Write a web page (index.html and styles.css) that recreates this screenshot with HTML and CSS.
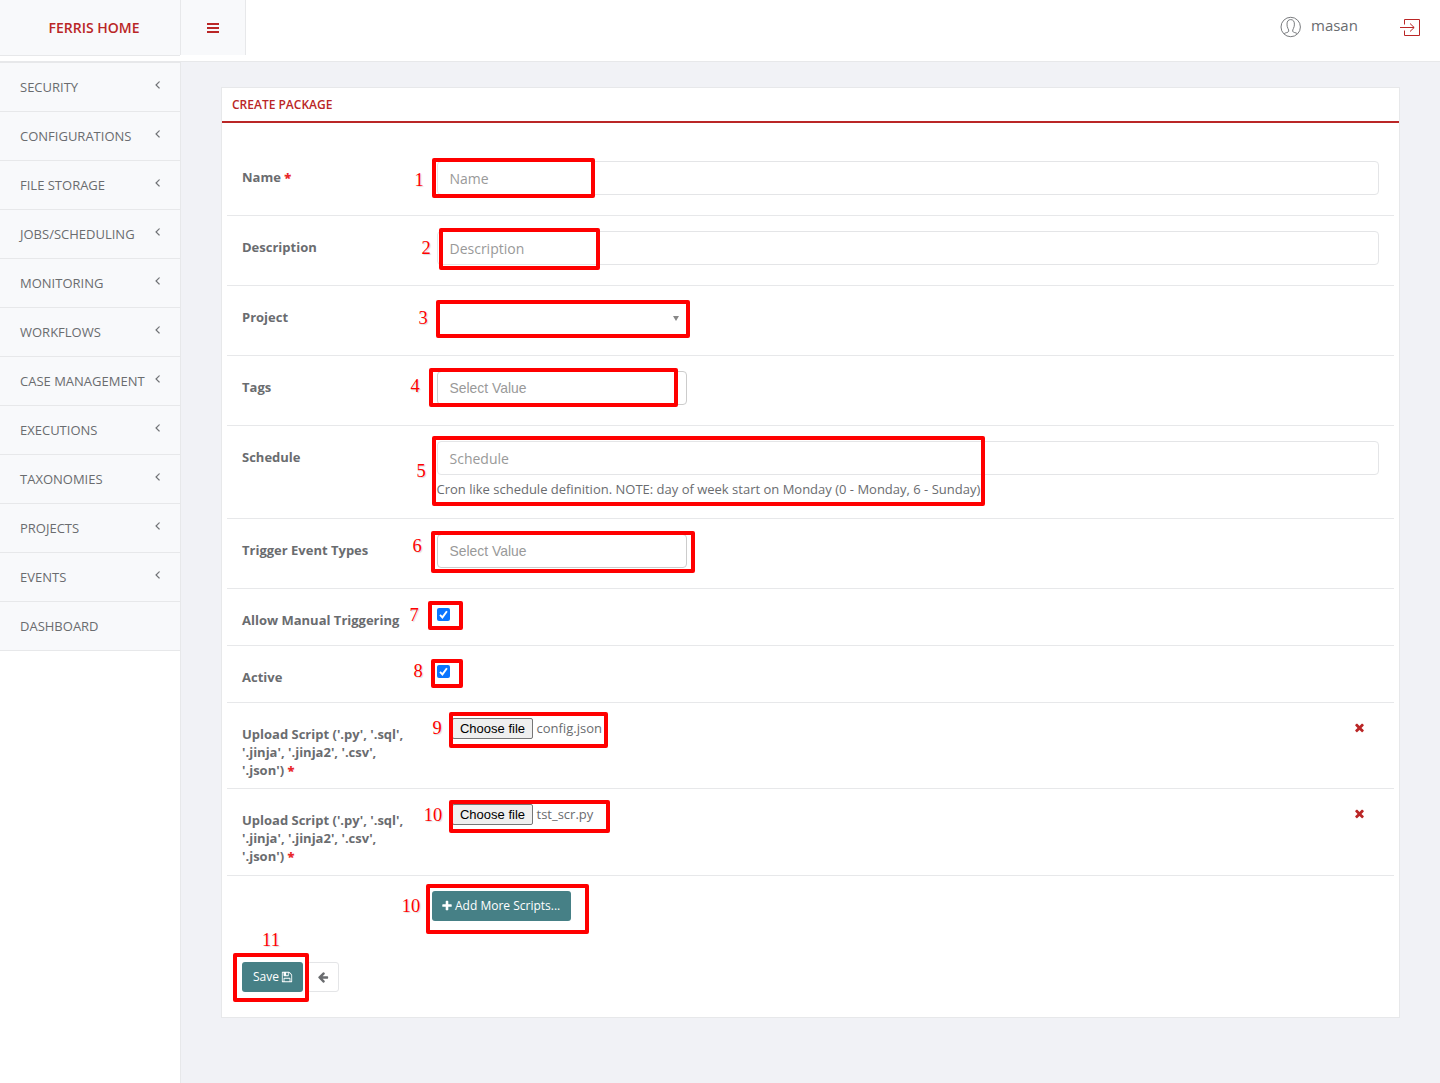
FILE: index.html
```html
<!DOCTYPE html>
<html lang="en">
<head>
<meta charset="utf-8">
<title>Create Package</title>
<link rel="stylesheet" href="styles.css">
</head>
<body>
<svg class="defs" aria-hidden="true">
  <symbol id="angle" viewBox="0 0 1792 1792"><path d="M1203 544q0 13-10 23l-393 393 393 393q10 10 10 23t-10 23l-50 50q-10 10-23 10t-23-10l-466-466q-10-10-10-23t10-23l466-466q10-10 23-10t23 10l50 50q10 10 10 23z"/></symbol>
  <symbol id="times" viewBox="0 0 1792 1792"><path d="M1490 1322q0 40-28 68l-136 136q-28 28-68 28t-68-28l-294-294-294 294q-28 28-68 28t-68-28l-136-136q-28-28-28-68t28-68l294-294-294-294q-28-28-28-68t28-68l136-136q28-28 68-28t68 28l294 294 294-294q28-28 68-28t68 28l136 136q28 28 28 68t-28 68l-294 294 294 294q28 28 28 68z"/></symbol>
  <symbol id="plus" viewBox="0 0 1792 1792"><path d="M1600 736v192q0 40-28 68t-68 28h-416v416q0 40-28 68t-68 28h-192q-40 0-68-28t-28-68v-416h-416q-40 0-68-28t-28-68v-192q0-40 28-68t68-28h416v-416q0-40 28-68t68-28h192q40 0 68 28t28 68v416h416q40 0 68 28t28 68z"/></symbol>
  <symbol id="floppy" viewBox="0 0 1792 1792"><path d="M512 1536h768v-384h-768v384zm896 0h128v-896q0-14-10-38.500t-20-34.500l-281-281q-10-10-34-20t-39-10v416q0 40-28 68t-68 28h-576q-40 0-68-28t-28-68v-416h-128v1280h128v-416q0-40 28-68t68-28h832q40 0 68 28t28 68v416zm-384-928v-320q0-13-9.500-22.500t-22.500-9.500h-192q-13 0-22.500 9.500t-9.500 22.500v320q0 13 9.500 22.500t22.500 9.500h192q13 0 22.500-9.500t9.500-22.500zm640 32v928q0 40-28 68t-68 28h-1344q-40 0-68-28t-28-68v-1344q0-40 28-68t68-28h928q40 0 88 20t76 48l280 280q28 28 48 76t20 88z"/></symbol>
  <symbol id="arrow" viewBox="0 0 1792 1792"><path d="M1664 896v128q0 53-32.500 90.500t-84.500 37.500h-704l293 294q38 36 38 90t-38 90l-75 76q-37 37-90 37-52 0-91-37l-651-652q-37-37-37-90 0-52 37-91l651-650q38-38 91-38 52 0 90 38l75 74q38 38 38 91t-38 91l-293 293h704q52 0 84.500 37.500t32.500 90.500z"/></symbol>
  <symbol id="check" viewBox="0 0 13 13"><rect width="13" height="13" rx="2" fill="#0a75ff"/><path d="M3 6.900l2.400 2.500L9.900 3.200" fill="none" stroke="#fff" stroke-width="1.900"/></symbol>
</svg>

<header class="topbar">
  <a class="brand">FERRIS HOME</a>
  <a class="toggle"><svg width="12" height="10" viewBox="0 0 12 10"><path d="M0 0h12v2H0zM0 4h12v2H0zM0 8h12v2H0z"/></svg></a>
  <div class="account">
    <svg class="user-icon" width="22" height="22" viewBox="0 0 22 22"><circle cx="10.700" cy="11" r="9.700"/><path d="M4.200 17.600c1-1 4.300-1 4.500-2.300.2-1-.1-1.600-.7-2.700-.8-1.500-1-3-1-4.500 0-2.900 1.300-4.500 3.700-4.500s3.700 1.600 3.700 4.500c0 1.500-.2 3-1 4.500-.6 1.100-.9 1.700-.7 2.700.2 1.300 3.500 1.300 4.500 2.300"/></svg>
    <span class="user-name">masan</span>
    <svg class="logout" width="20" height="18" viewBox="0 0 20 18"><path d="M4.500 5.500V.5h15v16h-15v-5M0 8.500h14M10 4.500l4.200 4-4.200 4"/></svg>
  </div>
</header>

<div class="shell">
  <nav class="sidebar">
    <a class="item">SECURITY<svg><use href="#angle"/></svg></a>
    <a class="item">CONFIGURATIONS<svg><use href="#angle"/></svg></a>
    <a class="item">FILE STORAGE<svg><use href="#angle"/></svg></a>
    <a class="item">JOBS/SCHEDULING<svg><use href="#angle"/></svg></a>
    <a class="item">MONITORING<svg><use href="#angle"/></svg></a>
    <a class="item">WORKFLOWS<svg><use href="#angle"/></svg></a>
    <a class="item">CASE MANAGEMENT<svg><use href="#angle"/></svg></a>
    <a class="item">EXECUTIONS<svg><use href="#angle"/></svg></a>
    <a class="item">TAXONOMIES<svg><use href="#angle"/></svg></a>
    <a class="item">PROJECTS<svg><use href="#angle"/></svg></a>
    <a class="item">EVENTS<svg><use href="#angle"/></svg></a>
    <a class="item">DASHBOARD</a>
  </nav>

  <main class="content">
    <section class="panel">
      <h1 class="panel-title">CREATE PACKAGE</h1>
      <form class="form">
        <div class="row"><label>Name <b>*</b></label><div class="field"><div class="input">Name</div></div></div>
        <div class="row"><label>Description</label><div class="field"><div class="input">Description</div></div></div>
        <div class="row"><label>Project</label><div class="field"><div class="select"><i class="caret"></i></div></div></div>
        <div class="row"><label>Tags</label><div class="field"><div class="multi">Select Value</div></div></div>
        <div class="row row-help"><label>Schedule</label><div class="field"><div class="input">Schedule</div><span class="help">Cron like schedule definition. NOTE: day of week start on Monday (0 - Monday, 6 - Sunday)</span></div></div>
        <div class="row"><label>Trigger Event Types</label><div class="field"><div class="multi">Select Value</div></div></div>
        <div class="row row-check"><label>Allow Manual Triggering</label><div class="field"><svg class="check"><use href="#check"/></svg></div></div>
        <div class="row row-check"><label>Active</label><div class="field"><svg class="check"><use href="#check"/></svg></div></div>
        <div class="row row-file"><label>Upload Script ('.py', '.sql', '.jinja', '.jinja2', '.csv', '.json') <b>*</b></label><div class="field file"><span class="choose">Choose file</span><span class="filename">config.json</span><svg class="remove"><use href="#times"/></svg></div></div>
        <div class="row row-file last"><label>Upload Script ('.py', '.sql', '.jinja', '.jinja2', '.csv', '.json') <b>*</b></label><div class="field file"><span class="choose">Choose file</span><span class="filename">tst_scr.py</span><svg class="remove"><use href="#times"/></svg></div></div>
        <div class="more"><span class="btn add"><svg><use href="#plus"/></svg>Add More Scripts...</span></div>
        <div class="actions"><span class="btn save">Save<svg><use href="#floppy"/></svg></span><span class="btn back"><svg><use href="#arrow"/></svg></span></div>
      </form>
    </section>
  </main>
</div>

<div class="marks">
  <i class="box b1"></i><span class="num n1">1</span>
  <i class="box b2"></i><span class="num n2">2</span>
  <i class="box b3"></i><span class="num n3">3</span>
  <i class="box b4"></i><span class="num n4">4</span>
  <i class="box b5"></i><span class="num n5">5</span>
  <i class="box b6"></i><span class="num n6">6</span>
  <i class="box b7"></i><span class="num n7">7</span>
  <i class="box b8"></i><span class="num n8">8</span>
  <i class="box b9"></i><span class="num n9">9</span>
  <i class="box b10"></i><span class="num n10">10</span>
  <i class="box b11"></i><span class="num n11">10</span>
  <i class="box b12"></i><span class="num n12">11</span>
</div>
</body>
</html>
```
FILE: styles.css
```css
* { box-sizing: border-box; }
body { margin: 0; height: 1083px; overflow: hidden; position: relative; display: flex; flex-direction: column; background: #f1f2f6; color: #6a6c6f; font: 13px/18px "Open Sans", sans-serif; }
svg { display: block; fill: currentColor; flex: none; }
.defs { position: absolute; width: 0; height: 0; }

.topbar { display: flex; align-items: flex-start; height: 62px; flex: none; background: #fff; border-bottom: 1px solid #e7e8ea; }
.brand { width: 180px; height: 56px; padding: 18px 0 0 8px; background: #f8f9fb; border-bottom: 1px solid #e7e8ea; text-align: center; font-size: 14px; line-height: 20px; font-weight: 600; color: #ba2626; }
.toggle { width: 66px; height: 55px; padding: 23px 0 0 26px; background: #f8f9fb; border: solid #e7e8ea; border-width: 0 1px; color: #ba2626; }
.account { margin-left: auto; display: flex; align-items: flex-start; padding-right: 20px; }
.user-icon { margin: 16px 9px 0 0; fill: none; stroke: #6a6c6f; stroke-width: .9; }
.user-name { margin-top: 15px; width: 49px; font-size: 15px; line-height: 20px; }
.logout { margin: 19px 0 0 40px; fill: none; stroke: #ba2626; stroke-width: 1; }

.shell { flex: 1; display: flex; }
.sidebar { width: 181px; background: #fff; border-right: 1px solid #e7e8ea; border-top: 1px solid #e7e8ea; }
.item { display: flex; justify-content: space-between; height: 49px; padding: 15px 16px 0 20px; background: #f8f9fb; border-bottom: 1px solid #e7e8ea; }
.item svg { width: 13px; height: 13px; stroke: currentColor; stroke-width: 30; }

.content { flex: 1; padding: 25px 40px 0; }
.panel { height: 931px; background: #fff; border: 1px solid #e7e8ea; }
.panel-title { margin: 0; height: 35px; padding: 8px 10px 0; border-bottom: 2px solid #ba2626; font-size: 12px; line-height: 18px; font-weight: 600; color: #ba2626; }
.form { padding: 23px 5px 0; }
.row { display: flex; height: 70px; padding: 15px 15px 0; border-bottom: 1px solid #e7e8ea; }
.row-help { height: 93px; }
.row-check { height: 57px; }
.row-file { height: 86px; }
.row-file.last { height: 87px; }
.row label { width: 195px; padding: 7px 30px 0 0; font-weight: 700; }
.row-check label { padding-right: 0; }
.row-file label { padding-right: 28px; }
.row b { color: #e8282b; }
.field { flex: 1; }
.input { height: 34px; padding: 0 11.500px; border: 1px solid #e4e5e7; border-radius: 4px; font-size: 14px; line-height: 34px; color: #999; }
.help { display: block; margin: 5px 0 0 -.5px; }
.select, .multi { width: 250px; height: 34px; border: 1px solid #ccc; border-radius: 4px; padding: 0 11.500px; line-height: 32px; }
.select { border-color: #fff; display: flex; justify-content: flex-end; align-items: center; padding-right: 7px; }
.caret { border: solid transparent; border-width: 5px 3.500px 0; border-top-color: #888; }
.multi { font-family: "Liberation Sans", sans-serif; font-size: 13.900px; color: #999; }
.check { width: 13px; height: 13px; margin-top: 4px; }
.file { display: flex; padding-left: 15px; }
.choose { width: 81px; height: 21px; border: 1px solid #767676; border-radius: 2px; background: #efefef; color: #000; text-align: center; font: 13px/19px "Liberation Sans", sans-serif; }
.filename { margin: 1px 0 0 3.500px; }
.remove { width: 13px; height: 13px; margin: 3px 13.500px 0 auto; color: #ba2626; }
.btn { display: flex; align-items: center; height: 30px; border-radius: 3px; font-size: 12px; color: #fff; background: #468086; }
.btn svg { width: 12px; height: 12px; }
.more { padding: 15px 0 0 205px; height: 86px; }
.add { width: 139px; padding-left: 9px; gap: 2px; }
.actions { display: flex; padding-left: 15px; gap: 4px; }
.save { width: 61px; padding-left: 11px; gap: 2px; }
.back { width: 32px; justify-content: center; background: #fff; border: 1px solid #e4e5e7; color: #6a6c6f; }

/* numbered callouts drawn over the form */
.box { position: absolute; border: 4px solid #f00; border-radius: 2px; }
.num { position: absolute; width: 30px; text-align: center; font: 18.500px/20px "Liberation Serif", serif; color: #f00; text-shadow: 1px 1px 1px rgba(0,0,0,.15); }
.b1 { left: 432px; top: 158px; width: 163px; height: 40px; }
.b2 { left: 439px; top: 228px; width: 161px; height: 42px; }
.b3 { left: 436px; top: 300px; width: 254px; height: 38px; }
.b4 { left: 429px; top: 368px; width: 249px; height: 39px; }
.b5 { left: 432px; top: 436px; width: 553px; height: 70px; }
.b6 { left: 431px; top: 531px; width: 264px; height: 42px; }
.b7 { left: 428px; top: 601px; width: 35px; height: 29px; }
.b8 { left: 431px; top: 659px; width: 32px; height: 29px; }
.b9 { left: 449px; top: 712px; width: 159px; height: 36px; }
.b10 { left: 449px; top: 800px; width: 161px; height: 33px; }
.b11 { left: 426px; top: 884px; width: 163px; height: 50px; }
.b12 { left: 233px; top: 953px; width: 76px; height: 49px; }
.n1 { left: 404px; top: 170px; }
.n2 { left: 411px; top: 238px; }
.n3 { left: 408px; top: 308px; }
.n4 { left: 400px; top: 376px; }
.n5 { left: 406px; top: 461px; }
.n6 { left: 402px; top: 536px; }
.n7 { left: 399px; top: 605px; }
.n8 { left: 403px; top: 661px; }
.n9 { left: 422px; top: 718px; }
.n10 { left: 418px; top: 805px; }
.n11 { left: 396px; top: 896px; }
.n12 { left: 256px; top: 930px; }
```
